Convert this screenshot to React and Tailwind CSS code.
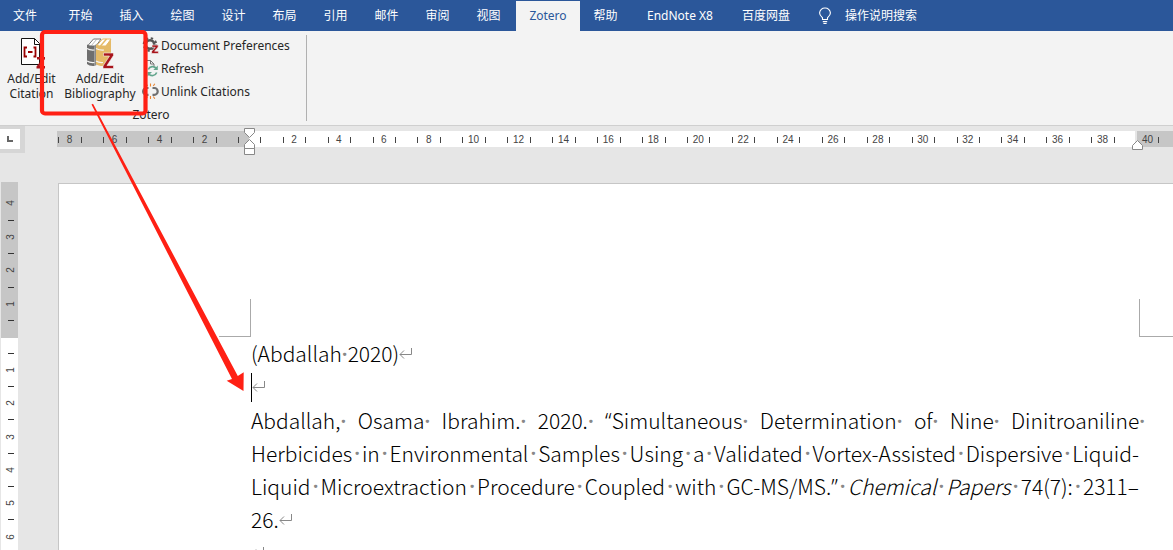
import React from 'react';

const TABS = ['开始', '插入', '绘图', '设计', '布局', '引用', '邮件', '审阅', '视图'];
const UI = "font-['Noto_Sans','Noto_Sans_CJK_SC',sans-serif]";

function Tab({ children }) {
  return (
    <button type="button" className="h-full w-[51px] shrink-0 text-center">
      {children}
    </button>
  );
}

function Bulb() {
  return (
    <svg width="14" height="18" viewBox="0 0 14 18" fill="none" stroke="#fff" strokeWidth="1.1">
      <path d="M4.5 12.5v-1.8C3 9.3 1.6 8.2 1.6 5.9A5.2 5.2 0 0 1 7 1a5.2 5.2 0 0 1 5.4 4.9c0 2.3-1.4 3.4-2.9 4.8v1.8zM4.8 14.6h4.4M5.4 16.5h3.2" />
    </svg>
  );
}

function CitationIcon() {
  return (
    <svg width="28" height="32" viewBox="0 0 28 32" fill="none">
      <path d="M3.5 1.5h13l5 5v21h-18z" fill="#fff" stroke="#111" />
      <path d="M16.500 1.500v6h5" stroke="#111" />
      <path d="M9 10.500H6.500v9H9M15.500 10.500h2v9h-2M10 15h4.500" stroke="#900" strokeWidth="1.8" />
      <path d="M19 20h8v2l-5.500 7H27v2.500h-8.500v-2l5.500-7h-5z" fill="#a8141b" />
    </svg>
  );
}

function BooksIcon() {
  return (
    <svg width="30" height="32" viewBox="0 0 30 32">
      <path d="M2.500 9 8.500 2H16l-5 7z" fill="#fff" stroke="#777" strokeWidth="1" />
      <path d="M6 9l6-7" stroke="#aaa" strokeWidth=".8" />
      <path d="M2 7.500q3.500 2 7.500 1.500v20q-5 .5-7.500-2z" fill="#6e6e6e" />
      <path d="m9.500 9 2-2.500V28l-2 1z" fill="#8a8a8a" />
      <path d="M11.500 9 17.500 2H26l-5 7z" fill="#fff" stroke="#e5ba67" strokeWidth="1" />
      <path d="M15.500 9l6-7" stroke="#e5ba67" strokeWidth="1.400" />
      <path d="M11 7.500q4 2 9.500 1.500v20q-7 .5-9.500-2zM20.500 9 26 2v16l-5.500 9z" fill="#e5ba67" />
      <path d="M2 11.500q3 2 7.500 1.500M2 24q3 2 7.500 1.500M11 11.500q4 2 8 1.500M11 24q3 2 7 1.500" fill="none" stroke="#f3f3f3" strokeWidth="1.200" />
      <path d="M18.500 16h10v2.500l-6.500 10h6.500v3H18V29l6.500-10h-6z" fill="#a8141b" stroke="#f3f3f3" strokeWidth=".6" />
    </svg>
  );
}

function GearIcon() {
  return (
    <svg width="17" height="17" viewBox="0 0 17 17" fill="none">
      <circle cx="8" cy="7.500" r="4.200" stroke="#555" strokeWidth="2.600" />
      <circle cx="8" cy="7.500" r="6.300" stroke="#555" strokeWidth="2" strokeDasharray="2.400 2.550" />
      <path d="M10 8h6.200v2l-3.600 4.200h3.800v2.300h-6.800v-2l3.600-4.200H10z" fill="#a8141b" stroke="#f3f3f3" strokeWidth=".6" />
    </svg>
  );
}

function RefreshIcon() {
  return (
    <svg width="17" height="17" viewBox="0 0 17 17" fill="none">
      <path d="M2.500 12V.5h6l3.500 3.500V6M8.500 .5v3.500H12" stroke="#777" />
      <path d="M6.300 9.500a4.600 4.600 0 0 1 8-1M14.700 12.500a4.600 4.600 0 0 1-8 1.200" stroke="#63a58d" strokeWidth="1.700" />
      <path d="M15.800 5.500v4.500h-4.500zM5.500 16.500V12H10z" fill="#63a58d" />
    </svg>
  );
}

function UnlinkIcon() {
  return (
    <svg width="17" height="17" viewBox="0 0 17 17" fill="none">
      <path d="M6.500 5H4.500a3.400 3.400 0 0 0 0 6.800h2M10.500 5h1.800a3.400 3.400 0 0 1 0 6.800h-1.800" stroke="#707070" strokeWidth="2.200" />
      <path d="M8.500 3.500V.5M5.700 3 4.200.8M11.300 3 12.800.8M8.500 13v3M5.700 13.500l-1.500 2.200M11.300 13.500l1.500 2.200" stroke="#e98530" strokeWidth="1.100" />
    </svg>
  );
}

function BigButton({ icon, first, second, className }) {
  return (
    <button type="button" className={`flex flex-col items-center pt-[2px] leading-[15px] ${className}`}>
      {icon}
      <span className="mt-[2px]">{first}</span>
      <span>{second}</span>
    </button>
  );
}

function SmallButton({ icon, children }) {
  return (
    <button type="button" className="flex h-[23px] items-center gap-[2px] whitespace-nowrap">
      {icon}
      {children}
    </button>
  );
}

function Tick() {
  return <span className="h-[6px] w-px bg-[#444]" />;
}

function RulerCell({ label, className }) {
  return (
    <div className={`grid grid-cols-[1fr_0px_1fr_0px_1fr_0px_1fr] items-center ${className}`}>
      <span />
      <Tick />
      <span />
      <span className="flex justify-center">{label}</span>
      <span />
      <Tick />
      <span />
    </div>
  );
}

function HorizontalRuler() {
  const labels = Array.from({ length: 19 }, (_, i) => (i + 1) * 2);
  return (
    <div className="ml-[32px] mt-[5px] flex h-[16px] min-w-0 flex-1 font-['Liberation_Sans',sans-serif] text-[10px] leading-[16px] text-[#444]">
      <div className="flex w-[192px] shrink-0 justify-end overflow-hidden bg-[#c6c6c6] pt-px">
        {[8, 6, 4, 2].map((n) => (
          <RulerCell key={n} label={n} className="w-[45px] shrink-0" />
        ))}
        <div className="flex w-[22px] shrink-0 items-center justify-center"><Tick /></div>
      </div>
      <div className="relative flex min-w-0 flex-1 bg-white pr-[10px] pt-px">
        <div className="flex flex-1 items-center justify-center"><Tick /></div>
        {labels.map((n) => (
          <RulerCell key={n} label={n} className="flex-[2]" />
        ))}
        <svg className="absolute -left-[5px] -top-[4px]" width="12" height="30" viewBox="0 0 12 30" fill="#fff" stroke="#888">
          <path d="M.5 1.500h10v4l-5 5-5-5zM5.500 12.500l5 5v4H.5v-4zM.5 21.500h10v6H.5z" />
        </svg>
        <svg className="absolute -right-[9px] top-[8px] z-10" width="12" height="12" viewBox="0 0 12 12" fill="#fff" stroke="#888">
          <path d="M5.500 1.500l5 5v4H.5v-4z" />
        </svg>
      </div>
      <div className="ml-[2px] flex w-[36px] shrink-0 items-center gap-[5px] bg-[#c6c6c6] pt-px">
        <span />
        <span>40</span>
        <Tick />
      </div>
    </div>
  );
}

function VerticalSlot({ label }) {
  return (
    <div className="flex items-center justify-center">
      {label ? <span className="-rotate-90 leading-none">{label}</span> : <span className="h-px w-[6px] bg-[#333]" />}
    </div>
  );
}

function VerticalRuler() {
  return (
    <div className="ml-px w-[17px] shrink-0 bg-white font-['Liberation_Sans',sans-serif] text-[10px] text-[#444]">
      <div className="h-[156px] bg-[#c6c6c6] pl-[2px] pt-[13px]">
        <div className="grid h-[134px] grid-rows-8">
          {[4, 0, 3, 0, 2, 0, 1, 0].map((n, i) => <VerticalSlot key={i} label={n} />)}
        </div>
      </div>
      <div className="mt-[7px] grid h-[200px] grid-rows-12 pl-[2px]">
        {[0, 1, 0, 2, 0, 3, 0, 4, 0, 5, 0, 6].map((n, i) => <VerticalSlot key={i} label={n} />)}
      </div>
    </div>
  );
}

function Return() {
  return (
    <svg className="mb-[2px] inline-block align-baseline" width="14" height="13" viewBox="0 0 14 13" fill="none" stroke="#888">
      <path d="M12.500 1v6.500H1M5 3.500l-4 4 4 4" />
    </svg>
  );
}

function Dot() {
  return <span className="font-['Noto_Sans',sans-serif] font-semibold text-[#888]">·</span>;
}

function Quote({ children }) {
  return <span className="font-['Noto_Sans',sans-serif]">{children}</span>;
}

function Line({ words, italic = [], wide }) {
  return (
    <div className="flex h-[33px] justify-between whitespace-nowrap">
      {words.map((word, i) => {
        const text = <span className={italic.includes(word) ? 'italic' : ''}>{word}</span>;
        if (wide) {
          return i === words.length - 1
            ? <span key={i} className="-mr-[6px]">{text}<Dot /></span>
            : <span key={i}>{text}<Dot /></span>;
        }
        return (
          <React.Fragment key={i}>
            {text}
            {i < words.length - 1 && <Dot />}
          </React.Fragment>
        );
      })}
    </div>
  );
}

function Annotation() {
  return (
    <svg className="pointer-events-none absolute left-0 top-0" width="260" height="400" viewBox="0 0 260 400">
      <rect x="42" y="32" width="103.500" height="81.500" rx="3" fill="none" stroke="#ff2014" strokeWidth="4.200" />
      <path d="M91.500 104.500l1.500-.8L237.800 376l5.900-3.700-.2 18.700-16.800-10.300 5.300-1.700z" fill="#ff2014" />
    </svg>
  );
}

export default function App() {
  return (
    <div className={`relative flex h-screen min-h-[550px] flex-col overflow-hidden bg-[#e6e6e6] text-[#262626] ${UI}`}>
      <nav className="flex h-[31px] shrink-0 items-stretch whitespace-nowrap bg-[#2b579a] text-[12px] text-white">
        <button type="button" className="w-[55px] pl-[13px] text-left">文件</button>
        {TABS.map((t) => <Tab key={t}>{t}</Tab>)}
        <button type="button" className="ml-[2px] mt-px w-[64px] bg-[#f3f3f3] text-[#2b579a]">Zotero</button>
        <Tab>帮助</Tab>
        <button type="button" className="w-[98px]">EndNote X8</button>
        <button type="button" className="w-[74px]">百度网盘</button>
        <button type="button" className="ml-[15px] flex items-center gap-[13px]">
          <Bulb />
          操作说明搜索
        </button>
      </nav>

      <section className="flex h-[95px] shrink-0 border-b border-[#cfcfcf] bg-[#f3f3f3] pt-[4px] text-[12px]">
        <div className="flex h-[86px] w-[307px] flex-col border-r border-[#b0b0b0]">
          <div className="flex h-[71px] items-start">
            <BigButton className="w-[63px]" icon={<CitationIcon />} first="Add/Edit" second="Citation" />
            <BigButton className="w-[74px]" icon={<BooksIcon />} first="Add/Edit" second="Bibliography" />
            <div className="-mt-px ml-[5px] flex flex-col">
              <SmallButton icon={<GearIcon />}>Document Preferences</SmallButton>
              <SmallButton icon={<RefreshIcon />}>Refresh</SmallButton>
              <SmallButton icon={<UnlinkIcon />}>Unlink Citations</SmallButton>
            </div>
          </div>
          <div className="pr-1 pt-[3px] text-center leading-[18px]">Zotero</div>
        </div>
      </section>

      <div className="flex h-[56px] shrink-0">
        <div className="h-[27px] w-[25px] shrink-0 bg-[#d6d6d6] pt-[3px]">
          <button type="button" aria-label="Tab stop" className="flex h-[20px] w-[20px] items-center justify-center bg-white">
            <svg width="6" height="6" viewBox="0 0 6 6" fill="none" stroke="#666" strokeWidth="2"><path d="M1 0v5h5" /></svg>
          </button>
        </div>
        <HorizontalRuler />
      </div>

      <div className="flex min-h-0 flex-1">
        <VerticalRuler />
        <main className="ml-[40px] mt-px min-w-0 flex-1 border-l border-t border-[#c6c6c6] bg-white">
          <div className="mt-[115px] flex h-[38px] justify-between">
            <div className="ml-[160px] w-[32px] border-b border-r border-[#aaa]" />
            <div className="w-[34px] border-b border-l border-[#aaa]" />
          </div>
          <article className="pl-[192px] pr-[34px] font-['Noto_Sans_CJK_SC',sans-serif] text-[21px] font-light leading-[33px] text-black">
            <p className="mb-[3px] h-[33px]">(Abdallah<Dot />2020)<Return /></p>
            <p className="mb-[2px] flex items-center"><span className="h-[29px] w-px bg-black" /><Return /></p>
            <div>
              <Line wide words={['Abdallah,', 'Osama', 'Ibrahim.', '2020.', <><Quote>“</Quote>Simultaneous</>, 'Determination', 'of', 'Nine', 'Dinitroaniline']} />
              <Line words={['Herbicides', 'in', 'Environmental', 'Samples', 'Using', 'a', 'Validated', 'Vortex-Assisted', 'Dispersive', 'Liquid-']} />
              <Line words={['Liquid', 'Microextraction', 'Procedure', 'Coupled', 'with', <>GC-MS/MS.<Quote>”</Quote></>, 'Chemical', 'Papers', '74(7):', '2311–']} italic={['Chemical', 'Papers']} />
              <div className="h-[33px]">26.<Return /></div>
            </div>
            <p><Return /></p>
          </article>
        </main>
      </div>
      <Annotation />
    </div>
  );
}
